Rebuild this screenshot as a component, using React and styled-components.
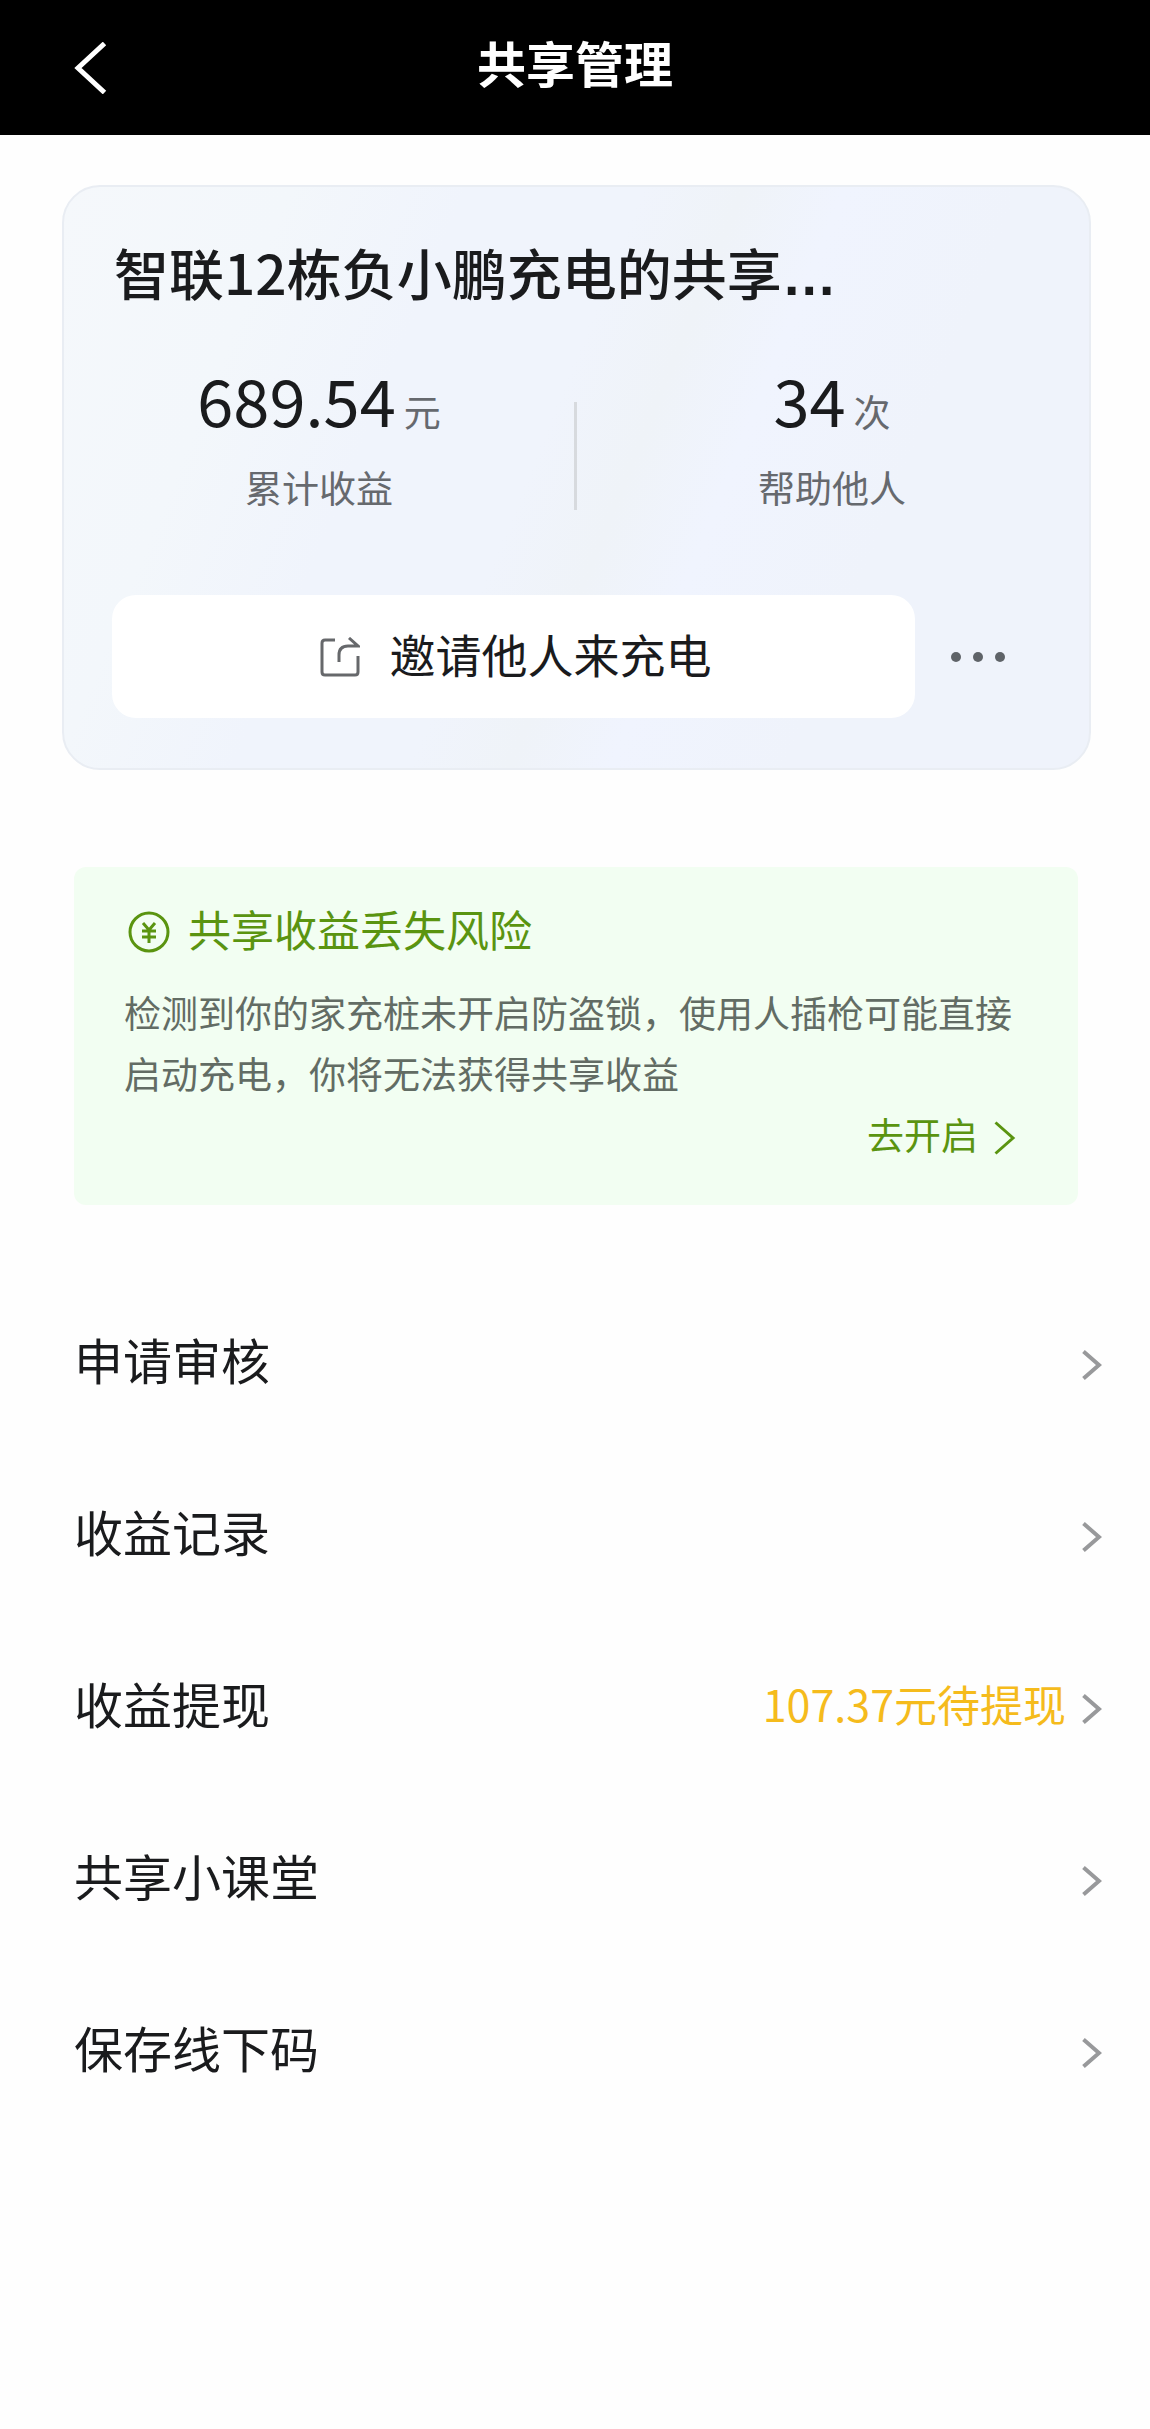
import React from "react";
import styled, { createGlobalStyle } from "styled-components";

const textFont = '"Liberation Sans", "Noto Sans CJK SC", sans-serif';
const figureFont = '"Noto Sans CJK SC", "Noto Sans", sans-serif';

const GlobalStyle = createGlobalStyle`
  *, *::before, *::after { box-sizing: border-box; }
  body {
    margin: 0;
    background: #fefefe;
    color: #1a1b1d;
    font-family: ${textFont};
  }
  h1, h2, p, ul, dl, dd { margin: 0; padding: 0; font-weight: 400; }
  ul { list-style: none; }
  button {
    border: 0;
    padding: 0;
    background: none;
    color: inherit;
    font: inherit;
    cursor: pointer;
  }
  a { color: inherit; text-decoration: none; }
  svg { display: block; flex: none; }
`;

const Header = styled.header`
  display: grid;
  grid-template-columns: 180px 1fr 180px;
  align-items: center;
  height: 135px;
  background: #000;
  color: #fff;
`;

const BackButton = styled.button`
  justify-self: start;
  padding: 8px 24px 8px 74px;
`;

const PageTitle = styled.h1`
  padding-bottom: 4px;
  font-size: 49px;
  line-height: 72px;
  font-weight: 700;
  text-align: center;
`;

const Main = styled.main`
  padding: 50px 0 60px;
`;

const Card = styled.section`
  margin: 0 59px 0 62px;
  padding: 48px 0 50px;
  border: 2px solid #e9edf3;
  border-radius: 38px;
  background: linear-gradient(
    112deg,
    #f5f8fb 0%,
    #f3f7fb 18%,
    #f0f4fc 32%,
    #f0f4fc 46%,
    #eff3f8 54%,
    #f0f4fe 62%,
    #eff3fb 76%
  );
`;

const CardTitle = styled.h2`
  padding: 0 50px;
  font-family: ${figureFont};
  font-size: 55px;
  line-height: 72px;
  font-weight: 500;
  white-space: nowrap;
`;

const Ellipsis = styled.span`
  font-family: ${textFont};
  font-weight: 700;
  line-height: 1;
`;

const Stats = styled.dl`
  display: flex;
  align-items: flex-end;
  margin-top: 56px;
  padding: 0 2px 0 0;
`;

const Stat = styled.div`
  flex: 1;
  display: flex;
  flex-direction: column-reverse;
  align-items: center;
  gap: 30px;
`;

const StatLabel = styled.dt`
  font-size: 37px;
  line-height: 52px;
  color: #66696e;
`;

const StatValue = styled.dd`
  display: flex;
  align-items: baseline;
  gap: 8px;
  font-family: ${figureFont};
  font-size: 65px;
  line-height: 72px;
`;

const Unit = styled.span`
  font-size: 37px;
  line-height: 1;
  color: #66696e;
`;

const Divider = styled.span`
  width: 3px;
  height: 108px;
  margin-bottom: 7px;
  background: #d7dade;
`;

const CardActions = styled.div`
  display: flex;
  margin-top: 78px;
  padding: 0 48px;
`;

const InviteButton = styled.button`
  flex: 1;
  display: flex;
  align-items: center;
  justify-content: center;
  gap: 30px;
  height: 123px;
  padding-left: 4px;
  border-radius: 24px;
  background: #fff;
  font-size: 46px;
  line-height: 62px;
`;

const MoreButton = styled.button`
  display: flex;
  align-items: center;
  justify-content: center;
  gap: 12px;
  width: 126px;
`;

const Dot = styled.span`
  width: 10px;
  height: 10px;
  border-radius: 50%;
  background: #5f6368;
`;

const Notice = styled.section`
  margin: 97px 72px 0 74px;
  padding: 34px 62px 37px 50px;
  border-radius: 12px;
  background: #f2fef2;
`;

const NoticeTitle = styled.h2`
  display: flex;
  align-items: center;
  gap: 18px;
  padding-left: 4px;
  font-size: 43px;
  line-height: 62px;
  color: #5a9410;
`;

const NoticeText = styled.p`
  margin-top: 22px;
  font-size: 37px;
  line-height: 61px;
  color: #626c64;
`;

const NoticeLink = styled.a`
  display: flex;
  align-items: center;
  justify-content: flex-end;
  gap: 16px;
  font-size: 37px;
  line-height: 61px;
  color: #5a9410;
`;

const Menu = styled.ul`
  margin-top: 74px;
`;

const MenuLink = styled.a`
  display: flex;
  align-items: center;
  height: 172px;
  padding: 0 48px 0 74px;
`;

const MenuLabel = styled.span`
  flex: 1;
  padding-bottom: 4px;
  font-size: 49px;
  line-height: 72px;
`;

const MenuValue = styled.span`
  margin-right: 16px;
  padding-bottom: 12px;
  font-family: ${figureFont};
  font-size: 43px;
  line-height: 62px;
  color: #f5bb1c;
`;

function Chevron({ width, height, stroke, color = "currentColor" }) {
  return (
    <svg width={width} height={height} viewBox={`0 0 ${width} ${height}`} fill="none" aria-hidden="true">
      <path
        d={`M1.5 1.5 L${width - 3} ${height / 2} L1.5 ${height - 1.5}`}
        stroke={color}
        strokeWidth={stroke}
      />
    </svg>
  );
}

function BackIcon() {
  return (
    <svg width="33" height="52" viewBox="0 0 33 52" fill="none" aria-hidden="true">
      <path d="M30.500 1.500 L4 26 L30.500 50.500" stroke="#fff" strokeWidth="5" />
    </svg>
  );
}

function ShareIcon() {
  return (
    <svg width="40" height="40" viewBox="0 0 40 40" fill="none" stroke="#66686b" strokeWidth="3" aria-hidden="true">
      <path d="M15 3 H5 Q2 3 2 6 V35 Q2 38 5 38 H35 Q38 38 38 35 V19" />
      <path d="M19 25 V18 Q19 9 28 9 H38 L29 1" />
    </svg>
  );
}

function YuanIcon() {
  return (
    <svg width="42" height="42" viewBox="0 0 42 42" fill="none" stroke="currentColor" strokeWidth="3" aria-hidden="true">
      <circle cx="21" cy="21" r="19" />
      <path d="M15 12 L21 19 L27 12 M21 19 V32 M14 20 H28 M14 26 H28" />
    </svg>
  );
}

const menuItems = [
  { label: "申请审核" },
  { label: "收益记录" },
  { label: "收益提现", value: "107.37元待提现" },
  { label: "共享小课堂" },
  { label: "保存线下码" },
];

export default function App() {
  return (
    <>
      <GlobalStyle />
      <Header>
        <BackButton type="button" aria-label="返回">
          <BackIcon />
        </BackButton>
        <PageTitle>共享管理</PageTitle>
      </Header>
      <Main>
        <Card>
          <CardTitle>
            智联12栋负小鹏充电的共享<Ellipsis>…</Ellipsis>
          </CardTitle>
          <Stats>
            <Stat>
              <StatLabel>累计收益</StatLabel>
              <StatValue>
                689.54<Unit>元</Unit>
              </StatValue>
            </Stat>
            <Divider />
            <Stat>
              <StatLabel>帮助他人</StatLabel>
              <StatValue>
                34<Unit>次</Unit>
              </StatValue>
            </Stat>
          </Stats>
          <CardActions>
            <InviteButton type="button">
              <ShareIcon />
              邀请他人来充电
            </InviteButton>
            <MoreButton type="button" aria-label="更多">
              <Dot />
              <Dot />
              <Dot />
            </MoreButton>
          </CardActions>
        </Card>

        <Notice>
          <NoticeTitle>
            <YuanIcon />
            共享收益丢失风险
          </NoticeTitle>
          <NoticeText>
            检测到你的家充桩未开启防盗锁，使用人插枪可能直接启动充电，你将无法获得共享收益
          </NoticeText>
          <NoticeLink href="#lock">
            去开启
            <Chevron width={22} height={34} stroke={3} />
          </NoticeLink>
        </Notice>

        <Menu>
          {menuItems.map((item) => (
            <li key={item.label}>
              <MenuLink href="#">
                <MenuLabel>{item.label}</MenuLabel>
                {item.value && <MenuValue>{item.value}</MenuValue>}
                <Chevron width={20} height={30} stroke={4} color="#98999b" />
              </MenuLink>
            </li>
          ))}
        </Menu>
      </Main>
    </>
  );
}
